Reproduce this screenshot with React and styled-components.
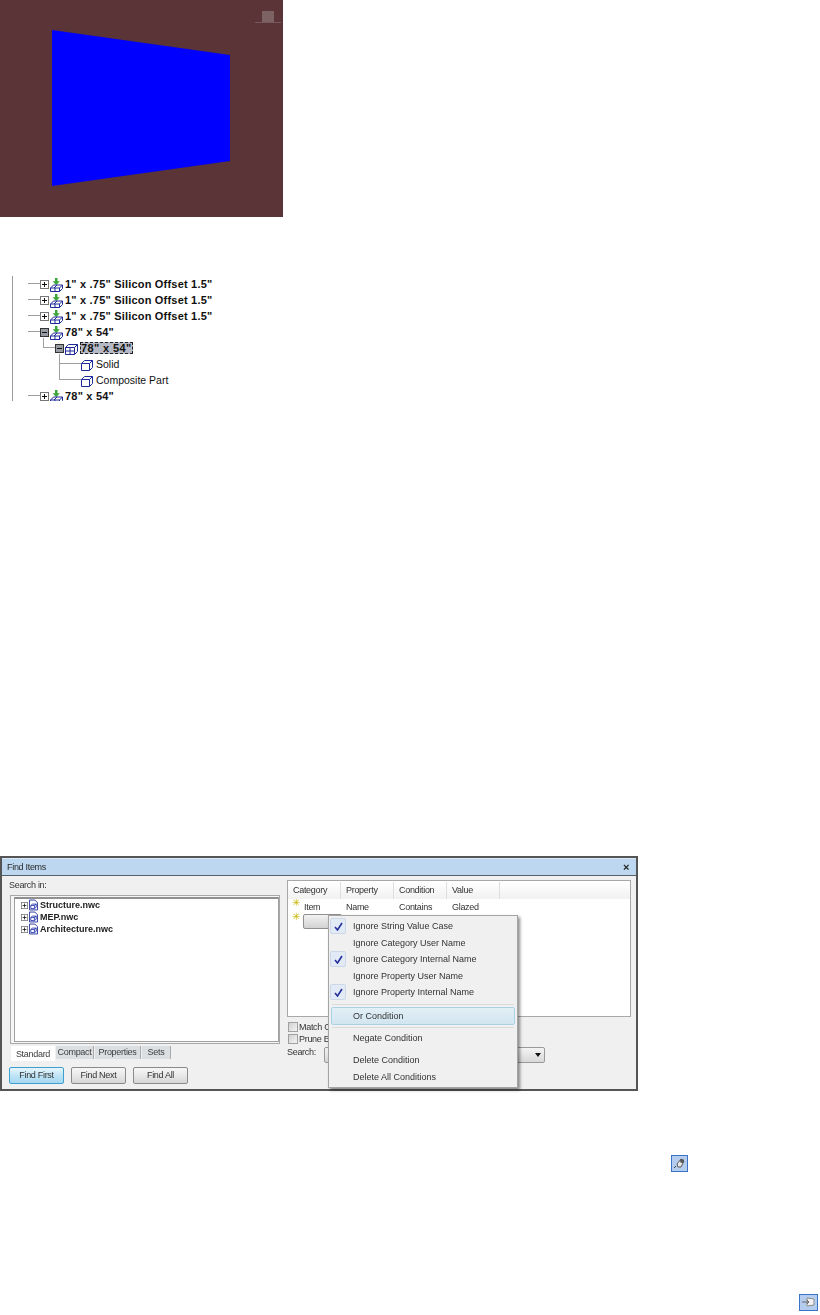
import React from "react";
import styled, { createGlobalStyle } from "styled-components";

const GlobalStyle = createGlobalStyle`
  html, body {
    margin: 0;
    padding: 0;
    background: #fff;
  }
`;

const Page = styled.div`
  width: 820px;
  height: 1315px;
  display: flex;
  flex-direction: column;
  overflow: hidden;
  font-family: "Liberation Sans", Arial, sans-serif;
`;

const Viewer = styled.svg`
  display: block;
  flex: none;
  width: 283px;
  height: 217px;
`;

/* ---- model tree ---- */

const ModelTree = styled.div`
  flex: none;
  width: 230px;
  height: 125px;
  margin: 59px 0 0 12px;
  border-left: 1px solid #9a9a9a;
  overflow: hidden;
`;

const TreeRow = styled.div`
  position: relative;
  display: flex;
  align-items: center;
  height: 16px;
  padding-left: ${(p) => p.$indent}px;
  font-size: ${(p) => (p.$bold ? "11px" : "10.5px")};
  font-weight: ${(p) => (p.$bold ? 700 : 400)};
  color: #111;
  white-space: nowrap;

  &::before {
    content: "";
    position: absolute;
    left: ${(p) => p.$lineFrom}px;
    width: ${(p) => p.$indent - p.$lineFrom}px;
    top: 7px;
    height: 1px;
    background: #a0a0a0;
  }

  &::after {
    content: "";
    display: ${(p) => (p.$elbow ? "block" : "none")};
    position: absolute;
    left: ${(p) => p.$lineFrom}px;
    bottom: 8px;
    width: 1px;
    height: ${(p) => p.$elbow}px;
    background: #a0a0a0;
  }
`;

const Expander = styled.svg`
  flex: none;
  position: relative;
  z-index: 1;
  width: ${(p) => p.$size}px;
  height: ${(p) => p.$size}px;
  margin-right: 1px;
`;

const TreeGlyph = styled.svg`
  flex: none;
  width: 13px;
  height: 15px;
  margin-right: 1px;
`;

const TreeLabel = styled.span`
  margin-left: 1px;
  letter-spacing: ${(p) => (p.$bold ? "0.2px" : "0")};
`;

const Selected = styled.span`
  margin-left: 1px;
  padding: 0 1px;
  background: #b6bac6;
  outline: 1px dashed #222;
  outline-offset: -1px;
  letter-spacing: 0.4px;
`;

/* ---- find items dialog ---- */

const Dialog = styled.div`
  flex: none;
  box-sizing: border-box;
  width: 638px;
  height: 235px;
  margin-top: 455px;
  border: 2px solid #555;
  background: #f0f0f0;
  display: flex;
  flex-direction: column;
  font-size: 9px;
  letter-spacing: -0.3px;
  color: #333;
  filter: blur(0.3px);
`;

const TitleBar = styled.div`
  flex: none;
  box-sizing: border-box;
  height: 18px;
  padding: 0 7px 0 5px;
  display: flex;
  align-items: center;
  justify-content: space-between;
  background: #bcd7ef;
  border-top: 1px solid #d8e8f6;
  border-bottom: 1px solid #53606c;
  color: #2a2a2a;
`;

const CloseMark = styled.span`
  font-size: 11px;
  font-weight: 700;
  color: #222;
`;

const DialogBody = styled.div`
  flex: 1;
  display: grid;
  grid-template-columns: 279px 350px;
  padding-left: 6px;
  min-height: 0;
`;

const LeftColumn = styled.div`
  display: flex;
  flex-direction: column;
  padding-top: 4px;
`;

const SearchLabel = styled.div`
  height: 15px;
  padding-left: 1px;
  line-height: 11px;
`;

const TreeFrame = styled.div`
  width: 270px;
  height: 149px;
  box-sizing: border-box;
  margin-left: 2px;
  padding: 1px 0 1px 3px;
  border: 1px solid #a8a8a8;
  background: #f6f6f6;
`;

const TreeInner = styled.div`
  height: 100%;
  box-sizing: border-box;
  padding-left: 6px;
  background: #fff;
  border: 1px solid #a0a0a0;
  border-top: 2px solid #909090;
`;

const FileRow = styled.div`
  height: 12px;
  display: flex;
  align-items: center;
  font-weight: 700;
  letter-spacing: 0;
  color: #222;
`;

const FileGlyph = styled.svg`
  flex: none;
  width: 9px;
  height: 12px;
  margin-right: 2px;
`;

const TabStrip = styled.div`
  display: flex;
  margin: 2px 0 0 3px;
  gap: 1px;
`;

const Tab = styled.div`
  height: ${(p) => (p.$active ? "15px" : "13px")};
  box-sizing: border-box;
  width: ${(p) => p.$width}px;
  line-height: ${(p) => (p.$active ? "16px" : "12px")};
  text-align: center;
  background: ${(p) => (p.$active ? "#fff" : "#dcdfe2")};
  border-right: ${(p) => (p.$active ? "none" : "1px solid #aaa")};
  color: #3c3c3c;
  white-space: nowrap;
`;

const ButtonRow = styled.div`
  display: flex;
  gap: 7px;
  margin: 6px 0 0 1px;
`;

const DialogButton = styled.div`
  box-sizing: border-box;
  width: 55px;
  height: 17px;
  line-height: 15px;
  text-align: center;
  border-radius: 2px;
  border: 1px solid ${(p) => (p.$primary ? "#3c9fd0" : "#8a8a8a")};
  background: ${(p) =>
    p.$primary
      ? "linear-gradient(#e8f6fc 0%, #bfe4f6 50%, #a6d8f0 100%)"
      : "linear-gradient(#f6f6f6 0%, #e8e8e8 50%, #d6d6d6 100%)"};
  color: #333;
`;

const RightColumn = styled.div`
  position: relative;
  display: flex;
  flex-direction: column;
  padding-top: 4px;
`;

const ConditionTable = styled.div`
  width: 344px;
  height: 137px;
  box-sizing: border-box;
  padding: 1px 0 0 0;
  margin-bottom: 4px;
  background: #fff;
  border: 1px solid #a8a8a8;
`;

const TableRow = styled.div`
  display: grid;
  grid-template-columns: 53px 53px 53px 53px 1fr;
  height: ${(p) => p.$height}px;
  align-items: start;
  background: ${(p) => (p.$header ? "linear-gradient(#fff, #f1f1f1)" : "transparent")};
  margin-bottom: ${(p) => (p.$header ? "3px" : "0")};
`;

const HeaderCell = styled.div`
  height: 100%;
  line-height: 17px;
  padding-left: 5px;
  border-right: 1px solid #dedede;
`;

const BodyCell = styled.div`
  position: relative;
  padding-left: 5px;
  line-height: 10px;

  &:first-child {
    padding-left: 16px;
  }
`;

const NewRowMark = styled.span`
  position: absolute;
  left: 4px;
  top: ${(p) => p.$top}px;
  font-size: 10px;
  line-height: 10px;
  color: #c8b400;
`;

const FieldButton = styled.div`
  width: 39px;
  height: 15px;
  box-sizing: border-box;
  margin: 2px 0 0 -1px;
  border: 1px solid #909090;
  border-radius: 2px;
  background: linear-gradient(#f2f2f2, #d2d2d2);
`;

const OptionLine = styled.label`
  display: flex;
  align-items: center;
  height: 12px;
  padding-left: 1px;
`;

const CheckBox = styled.span`
  width: 10px;
  height: 10px;
  box-sizing: border-box;
  margin-right: 1px;
  border: 1px solid #a0a0a0;
  background: linear-gradient(135deg, #d0d0d0, #f4f4f4);
`;

const SearchLine = styled.div`
  display: flex;
  align-items: center;
  height: 16px;
  margin-top: 2px;
`;

const SearchText = styled.span`
  width: 37px;
  margin-bottom: 6px;
`;

const SearchSelect = styled.div`
  position: relative;
  width: 221px;
  height: 16px;
  box-sizing: border-box;
  border: 1px solid #9a9a9a;
  border-radius: 2px;
  background: linear-gradient(#f4f4f4, #d8d8d8);

  &::after {
    content: "";
    position: absolute;
    right: 3px;
    top: 5px;
    border: 3.5px solid transparent;
    border-top: 4px solid #111;
  }
`;

const Menu = styled.div`
  position: absolute;
  left: 41px;
  top: 39px;
  width: 190px;
  height: 173px;
  box-sizing: border-box;
  padding: 2px;
  background: #f0f0f0;
  border: 1px solid #a4a4a4;
  box-shadow: 2px 2px 3px rgba(0, 0, 0, 0.45);
  letter-spacing: 0;
  color: #333;
`;

const MenuItem = styled.div`
  position: relative;
  display: flex;
  align-items: center;
  box-sizing: border-box;
  height: 16.5px;
  margin-bottom: ${(p) => p.$after || 0}px;
  padding-left: 22px;
  white-space: nowrap;
  ${(p) =>
    p.$hot &&
    `
    height: 18px;
    border: 1px solid #a9d2e4;
    border-radius: 2px;
    background: linear-gradient(#e2eff6, #d2e6f0);
    padding-left: 21px;
  `}
`;

const MenuCheck = styled.span`
  position: absolute;
  left: -1px;
  top: 0;
  width: 16px;
  height: 16px;
  display: flex;
  align-items: center;
  justify-content: center;
  box-sizing: border-box;
  border: 1px solid #ccd8e8;
  border-radius: 2px;
  background: #e2eaf5;
`;

const MenuDivider = styled.div`
  height: 1px;
  margin: ${(p) => p.$gap};
  background: #dcdcdc;
`;

const ToolIcon = styled.svg`
  display: block;
  flex: none;
  width: ${(p) => p.$size}px;
  height: 17px;
  margin-left: ${(p) => p.$left}px;
  margin-top: ${(p) => p.$top}px;
`;

const PlusBox = ({ minus, size = 9 }) => (
  <Expander $size={size} viewBox="0 0 9 9">
    <rect x=".5" y=".5" width="8" height="8" fill={minus ? "#9a9ca4" : "#fff"} stroke={minus ? "#333" : "#777"} />
    <path d={minus ? "M2 4.5h5" : "M2 4.5h5M4.5 2v5"} stroke="#111" fill="none" />
  </Expander>
);

const Instance = () => (
  <TreeGlyph viewBox="0 0 13 15">
    <path d="M5 1h2.5v3.2H10L6.2 8 2.6 4.2H5z" fill="#3aa53a" />
    <path d="M.5 11 3.5 8H12.5L9.5 11zM.5 11V14.5H9.5V11M9.5 14.5l3-3V8M5 11v3.5M7 8 4 11" fill="none" stroke="#1c2a9a" />
  </TreeGlyph>
);

const Composite = () => (
  <TreeGlyph viewBox="0 0 13 15">
    <path d="M.5 6.5 3.5 3.5h9L9.5 6.5zM.5 6.5V13.5H9.5V6.5M9.5 13.5l3-3V3.5M5 6.5v7M.5 10h9" fill="none" stroke="#1c2a9a" />
  </TreeGlyph>
);

const Cube = () => (
  <TreeGlyph viewBox="0 0 13 15">
    <path d="M.5 6.5 3.5 3.5h8L8.5 6.5zM.5 6.5V13.5H8.5V6.5M8.5 13.5l3-3V3.5" fill="#fff" stroke="#1c2a9a" />
  </TreeGlyph>
);

const FileIcon = () => (
  <FileGlyph viewBox="0 0 10 12">
    <path d="M.5.5h6l3 3v8H.5z" fill="#fff" stroke="#1c2a9a" />
    <path d="M2 6.5 4 5h4L6 6.5zM2 6.5V10h4V6.5M6 10l2-1.5V5" fill="none" stroke="#2a3ab0" />
  </FileGlyph>
);

const Tick = () => (
  <svg width="9" height="9" viewBox="0 0 9 9">
    <path d="M1 5l2.5 3L8 1" fill="none" stroke="#24309c" strokeWidth="1.6" />
  </svg>
);

const treeRows = [
  { label: '1" x .75" Silicon Offset 1.5"' },
  { label: '1" x .75" Silicon Offset 1.5"' },
  { label: '1" x .75" Silicon Offset 1.5"' },
  { label: '78" x 54"', minus: true },
];

const menuTop = [
  { label: "Ignore String Value Case", on: true },
  { label: "Ignore Category User Name" },
  { label: "Ignore Category Internal Name", on: true },
  { label: "Ignore Property User Name" },
  { label: "Ignore Property Internal Name", on: true },
];

export default function App() {
  return (
    <>
      <GlobalStyle />
      <Page>
        <Viewer viewBox="0 0 283 217">
          <rect width="283" height="217" fill="#5a3436" />
          <polygon points="52,30 230,55 230,161 52,186" fill="#0000ff" />
          <rect x="262" y="11" width="12" height="11" fill="#7d6264" />
          <rect x="255" y="22" width="26" height="1" fill="#74585a" />
        </Viewer>

        <ModelTree>
          {treeRows.map((row, i) => (
            <TreeRow key={i} $bold $indent={27} $lineFrom={15}>
              <PlusBox minus={row.minus} />
              <Instance />
              <TreeLabel $bold>{row.label}</TreeLabel>
            </TreeRow>
          ))}
          <TreeRow $bold $indent={42} $lineFrom={30} $elbow={10}>
            <PlusBox minus />
            <Composite />
            <Selected>78" x 54"</Selected>
          </TreeRow>
          <TreeRow $indent={68} $lineFrom={46} $elbow={10}>
            <Cube />
            <TreeLabel>Solid</TreeLabel>
          </TreeRow>
          <TreeRow $indent={68} $lineFrom={46} $elbow={16}>
            <Cube />
            <TreeLabel>Composite Part</TreeLabel>
          </TreeRow>
          <TreeRow $bold $indent={27} $lineFrom={15}>
            <PlusBox />
            <Instance />
            <TreeLabel $bold>78" x 54"</TreeLabel>
          </TreeRow>
        </ModelTree>

        <Dialog>
          <TitleBar>
            Find Items
            <CloseMark>×</CloseMark>
          </TitleBar>
          <DialogBody>
            <LeftColumn>
              <SearchLabel>Search in:</SearchLabel>
              <TreeFrame>
                <TreeInner>
                  {["Structure.nwc", "MEP.nwc", "Architecture.nwc"].map((name) => (
                    <FileRow key={name}>
                      <PlusBox size={7} />
                      <FileIcon />
                      {name}
                    </FileRow>
                  ))}
                </TreeInner>
              </TreeFrame>
              <TabStrip>
                <Tab $active $width={44}>Standard</Tab>
                <Tab $width={38}>Compact</Tab>
                <Tab $width={46}>Properties</Tab>
                <Tab $width={29}>Sets</Tab>
              </TabStrip>
              <ButtonRow>
                <DialogButton $primary>Find First</DialogButton>
                <DialogButton>Find Next</DialogButton>
                <DialogButton>Find All</DialogButton>
              </ButtonRow>
            </LeftColumn>

            <RightColumn>
              <ConditionTable>
                <TableRow $header $height={17}>
                  <HeaderCell>Category</HeaderCell>
                  <HeaderCell>Property</HeaderCell>
                  <HeaderCell>Condition</HeaderCell>
                  <HeaderCell>Value</HeaderCell>
                  <span />
                </TableRow>
                <TableRow $height={10}>
                  <BodyCell>
                    <NewRowMark $top={-4}>✳</NewRowMark>
                    Item
                  </BodyCell>
                  <BodyCell>Name</BodyCell>
                  <BodyCell>Contains</BodyCell>
                  <BodyCell>Glazed</BodyCell>
                </TableRow>
                <TableRow $height={17}>
                  <BodyCell>
                    <NewRowMark $top={0}>✳</NewRowMark>
                    <FieldButton />
                  </BodyCell>
                </TableRow>
              </ConditionTable>
              <OptionLine>
                <CheckBox />
                Match C
              </OptionLine>
              <OptionLine>
                <CheckBox />
                Prune B
              </OptionLine>
              <SearchLine>
                <SearchText>Search:</SearchText>
                <SearchSelect />
              </SearchLine>

              <Menu>
                {menuTop.map((item) => (
                  <MenuItem key={item.label}>
                    {item.on && (
                      <MenuCheck>
                        <Tick />
                      </MenuCheck>
                    )}
                    {item.label}
                  </MenuItem>
                ))}
                <MenuDivider $gap="3px 1px 2px" />
                <MenuItem $hot>Or Condition</MenuItem>
                <MenuDivider $gap="2px 1px" />
                <MenuItem $after={6}>Negate Condition</MenuItem>
                <MenuItem>Delete Condition</MenuItem>
                <MenuItem>Delete All Conditions</MenuItem>
              </Menu>
            </RightColumn>
          </DialogBody>
        </Dialog>

        <ToolIcon $size={17} $left={671} $top={64} viewBox="0 0 17 17">
          <rect x=".5" y=".5" width="16" height="16" fill="#b4cdee" stroke="#3a72c8" />
          <path d="M6 9l4-5 3 2-3 6H7z" fill="#e8e8e8" stroke="#5a5a5a" />
          <circle cx="11" cy="6" r="2" fill="#555" />
          <path d="M3 13l2-2" stroke="#444" />
        </ToolIcon>
        <ToolIcon $size={19} $left={799} $top={122} viewBox="0 0 19 17">
          <rect x=".5" y=".5" width="18" height="16" fill="#b4cdee" stroke="#3a72c8" />
          <path d="M8 4l7 1v6l-7 1z" fill="#f2f2f2" stroke="#8a8a8a" />
          <path d="M3 8h7M8 6l2 2-2 2" fill="none" stroke="#666" />
        </ToolIcon>
      </Page>
    </>
  );
}
